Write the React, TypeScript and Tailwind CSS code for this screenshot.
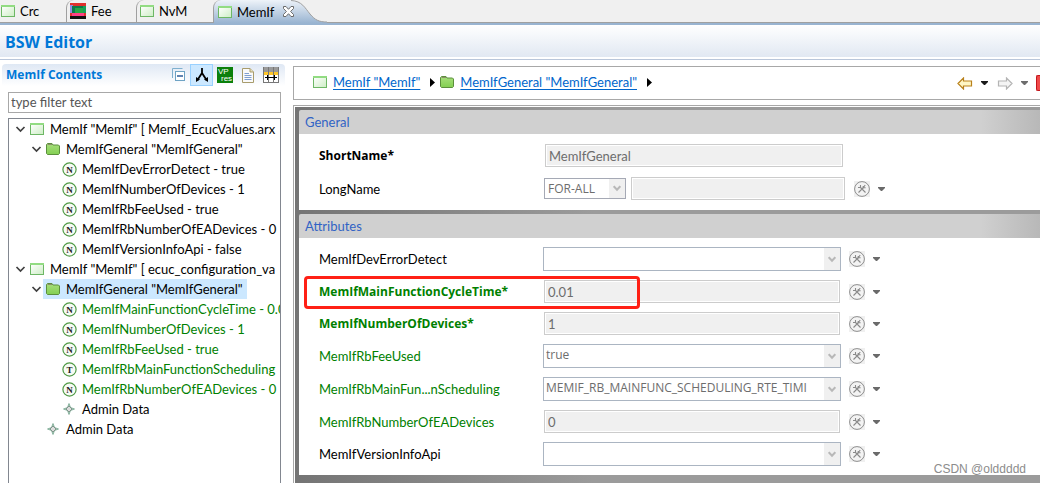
import { useState } from "react";
import type { ReactNode } from "react";

type IconKind = "module" | "folder" | "N" | "T" | "admin";

interface TreeNode {
  level: number;
  icon: IconKind;
  label: string;
  open?: boolean;
  green?: boolean;
}

const TREE: TreeNode[] = [
  { level: 0, icon: "module", label: 'MemIf "MemIf" [ MemIf_EcucValues.arx', open: true },
  { level: 1, icon: "folder", label: 'MemIfGeneral "MemIfGeneral"', open: true },
  { level: 2, icon: "N", label: "MemIfDevErrorDetect - true" },
  { level: 2, icon: "N", label: "MemIfNumberOfDevices - 1" },
  { level: 2, icon: "N", label: "MemIfRbFeeUsed - true" },
  { level: 2, icon: "N", label: "MemIfRbNumberOfEADevices - 0" },
  { level: 2, icon: "N", label: "MemIfVersionInfoApi - false" },
  { level: 0, icon: "module", label: 'MemIf "MemIf" [ ecuc_configuration_va', open: true },
  { level: 1, icon: "folder", label: 'MemIfGeneral "MemIfGeneral"', open: true },
  { level: 2, icon: "N", label: "MemIfMainFunctionCycleTime - 0.0", green: true },
  { level: 2, icon: "N", label: "MemIfNumberOfDevices - 1", green: true },
  { level: 2, icon: "N", label: "MemIfRbFeeUsed - true", green: true },
  { level: 2, icon: "T", label: "MemIfRbMainFunctionScheduling", green: true },
  { level: 2, icon: "N", label: "MemIfRbNumberOfEADevices - 0", green: true },
  { level: 2, icon: "admin", label: "Admin Data" },
  { level: 1, icon: "admin", label: "Admin Data" },
];

interface Attribute {
  id: string;
  label: string;
  kind: "select" | "text";
  value: string;
  tone: "plain" | "green" | "required";
  marked?: boolean;
}

const ATTRIBUTES: Attribute[] = [
  { id: "dev-error", label: "MemIfDevErrorDetect", kind: "select", value: "", tone: "plain" },
  { id: "cycle-time", label: "MemIfMainFunctionCycleTime*", kind: "text", value: "0.01", tone: "required", marked: true },
  { id: "devices", label: "MemIfNumberOfDevices*", kind: "text", value: "1", tone: "required" },
  { id: "fee-used", label: "MemIfRbFeeUsed", kind: "select", value: "true", tone: "green" },
  { id: "scheduling", label: "MemIfRbMainFun...nScheduling", kind: "select", value: "MEMIF_RB_MAINFUNC_SCHEDULING_RTE_TIMI", tone: "green" },
  { id: "ea-devices", label: "MemIfRbNumberOfEADevices", kind: "text", value: "0", tone: "green" },
  { id: "version-info", label: "MemIfVersionInfoApi", kind: "select", value: "", tone: "plain" },
];

const TONES = {
  plain: "text-black",
  green: "text-[#008000]",
  required: "font-['Open_Sans',sans-serif] text-[12px] font-bold text-[#008000]",
};

export default function App() {
  return (
    <div className="flex min-h-screen flex-col overflow-hidden bg-white font-['Lato','Open_Sans',sans-serif] text-[13px] leading-5 text-black">
      <EditorTabs />
      <header className="flex h-[33px] items-center border-b border-white bg-linear-to-b from-white to-[#e1e8f2] px-[5px] pt-0.5">
        <h1 className="font-['Open_Sans',sans-serif] text-[16px] font-bold text-[#0078d7]">BSW Editor</h1>
      </header>
      <div className="h-0.5 border-b border-[#b9c6da]" />
      <main className="flex flex-1">
        <ContentsPane />
        <DetailsPane />
      </main>
    </div>
  );
}

function EditorTabs() {
  return (
    <nav className="flex h-[25px] border-b-2 border-[#99b4d1] bg-[#f0f0f0]" role="tablist">
      <EditorTab label="Crc" className="w-[66px] border-b border-[#a0a0a0] pl-px" />
      <EditorTab label="Fee" className="w-[70px] rounded-tl-lg border-b border-l border-[#a0a0a0] pl-[3px]" picture />
      <EditorTab label="NvM" className="w-[77px] rounded-tl-lg border-b border-l border-[#a0a0a0] pl-[3px]" />
      <div className="flex h-[23px] w-[78px] items-center rounded-tl-lg border-l border-[#a0a0a0] bg-linear-to-b from-[#eef3f9] to-[#99b4d1] pl-1">
        <ModuleIcon />
        <button role="tab" aria-selected="true" className="ml-[5px] w-[46px] shrink-0 text-left">MemIf</button>
        <button aria-label="Close MemIf" className="relative z-10 shrink-0"><CloseIcon /></button>
      </div>
      <div className="h-[23px] w-[36px]">
        <svg viewBox="0 0 36 23" className="block h-[23px] w-[36px]">
          <defs>
            <linearGradient id="tab" x2="0" y2="1">
              <stop stopColor="#eef3f9" />
              <stop offset="1" stopColor="#99b4d1" />
            </linearGradient>
          </defs>
          <path d="M0 0H1C11 1 14 8 19 14C24 20 28 22 36 22V23H0Z" fill="url(#tab)" />
          <path d="M0 .5C11 1 14 8 19 14C24 20 28 22 36 22" fill="none" stroke="#a0a0a0" />
        </svg>
      </div>
      <div className="flex-1 border-b border-[#a0a0a0]" />
    </nav>
  );
}

function EditorTab({ label, className, picture }: { label: string; className: string; picture?: boolean }) {
  return (
    <div className={`flex h-[23px] items-center ${className}`}>
      {picture ? <ChipIcon /> : <ModuleIcon />}
      <button role="tab" aria-selected="false" className="ml-[5px]">{label}</button>
    </div>
  );
}

function ContentsPane() {
  const [selected, setSelected] = useState(8);

  return (
    <aside className="flex w-[287px] shrink-0 flex-col px-[2px] pt-1">
      <div className="flex h-[22px] items-center rounded-t bg-linear-to-b from-[#dfe8f4] to-white pr-[3px] pl-1">
        <h2 className="flex-1 font-['Open_Sans',sans-serif] text-[12px] font-bold text-[#0078d7]">MemIf Contents</h2>
        <div className="flex items-center">
          <ToolButton label="Collapse all"><CollapseIcon /></ToolButton>
          <ToolButton label="Hierarchy" active><ForkIcon /></ToolButton>
          <ToolButton label="Resources"><VpIcon /></ToolButton>
          <ToolButton label="Report"><PageIcon /></ToolButton>
          <ToolButton label="Columns"><TableIcon /></ToolButton>
        </div>
      </div>
      <input
        type="text"
        aria-label="Filter"
        placeholder="type filter text"
        className="mx-[6px] mt-[6px] h-[21px] w-[273px] border border-[#a8a8a8] px-0.5 pb-0.5 outline-none placeholder:text-[#555]"
      />
      <ul role="tree" className="mx-[6px] mt-[5px] w-[273px] flex-1 overflow-hidden border border-b-0 border-[#828790] pl-1">
        {TREE.map((node, i) => (
          <li key={i} role="treeitem" aria-selected={i === selected} className="flex h-5 items-center whitespace-nowrap">
            <span
              className={`flex shrink-0 items-center justify-end ${
                node.level === 0 ? "w-[14px]" : node.level === 1 ? "w-[30px]" : "w-[46px]"
              }`}
            >
              {node.open && <Chevron />}
            </span>
            <button
              onClick={() => setSelected(i)}
              className={`flex h-5 items-center pr-1 pl-0.5 ${i === selected ? "bg-[#cce8ff]" : ""} ${
                node.green ? "text-[#008000]" : ""
              }`}
            >
              <span className="mr-[5px] flex w-4 justify-center">
                <NodeIcon kind={node.icon} />
              </span>
              {node.label}
            </button>
          </li>
        ))}
      </ul>
    </aside>
  );
}

function ToolButton({ label, active, children }: { label: string; active?: boolean; children: ReactNode }) {
  return (
    <button
      aria-label={label}
      className={`flex h-[22px] w-[23px] items-center justify-center border ${
        active ? "border-[#99d1ff] bg-[#cce8ff]" : "border-transparent"
      }`}
    >
      {children}
    </button>
  );
}

function DetailsPane() {
  return (
    <section className="flex min-w-0 flex-1 flex-col pt-1.5 pl-[6px]">
      <div className="flex h-[34px] items-center border border-r-0 border-[#a8a8a8] pb-0.5 pl-[19px]">
        <ModuleIcon />
        <a href="#memif" className="ml-[6px] text-[#0066cc] underline underline-offset-2">MemIf "MemIf"</a>
        <RightArrow />
        <FolderIcon />
        <a href="#general" className="ml-[6px] text-[#0066cc] underline underline-offset-2">MemIfGeneral "MemIfGeneral"</a>
        <RightArrow />
        <div className="ml-auto flex items-center pt-0.5">
          <button aria-label="Back"><BackArrow /></button>
          <button aria-label="Back history" className="ml-[8px]"><DownArrow color="#1a1a1a" /></button>
          <button aria-label="Forward" className="ml-[9px]"><ForwardArrow /></button>
          <button aria-label="Forward history" className="ml-[8px]"><DownArrow color="#6d6d6d" /></button>
          <button aria-label="Stop" className="ml-2 h-4 w-1 rounded-l-xs border border-r-0 border-[#c4161c] bg-[#f04a4a]" />
        </div>
      </div>

      <div className="mt-[5px] flex flex-1 flex-col border-t border-l border-[#a8a8a8] pt-px pl-px">
        <div className="flex-1 bg-linear-to-r from-[#747474] to-[#9b9b9b] to-40% pt-[3px] pl-1">
          <Section title="General">
            <div className="flex flex-col gap-[10px] pt-[10px] pb-[10px]">
              <Row id="short-name" label="ShortName*" labelClass="font-['Open_Sans',sans-serif] text-[12px] font-bold">
                <TextField id="short-name" value="MemIfGeneral" className="ml-px w-[298px]" />
              </Row>
              <Row id="long-name" label="LongName" labelClass="">
                <div className="relative h-[21px] w-[82px]">
                  <select
                    aria-label="Language"
                    disabled
                    className="block h-full w-full appearance-none border border-[#a5a9b5] bg-white pb-0.5 pl-[3px] font-['Open_Sans',sans-serif] text-[12px] text-[#6d6d6d] opacity-100"
                  >
                    <option>FOR-ALL</option>
                  </select>
                  <DropMark />
                </div>
                <TextField id="long-name" value="" className="ml-[5px] w-[214px]" />
                <ToolMenu className="ml-[9px]" />
              </Row>
            </div>
          </Section>
          <div className="h-1" />
          <Section title="Attributes">
            <div className="flex flex-col gap-[9px] pt-[9px] pb-[9px]">
              {ATTRIBUTES.map((attr) => (
                <Row key={attr.id} id={attr.id} label={attr.label} labelClass={TONES[attr.tone]}>
                  {attr.kind === "select" ? (
                    <SelectField id={attr.id} value={attr.value} />
                  ) : (
                    <TextField id={attr.id} value={attr.value} className="mr-px w-[296px]" />
                  )}
                  <ToolMenu className="ml-2" />
                  {attr.marked && (
                    <span className="pointer-events-none absolute -top-1 -left-[15px] h-[33px] w-[336px] rounded-sm border-3 border-[#ff2015]" />
                  )}
                </Row>
              ))}
            </div>
            <p className="absolute right-[14px] bottom-0 font-['Liberation_Sans',sans-serif] text-[12px] leading-3 text-[#8c8c8c]">
              CSDN @olddddd
            </p>
          </Section>
          <div className="h-2" />
        </div>
      </div>
    </section>
  );
}

function Section({ title, children }: { title: string; children: ReactNode }) {
  return (
    <div className="relative">
      <h3 className="h-6 rounded-tl-xs bg-linear-to-r from-[#d0d0d0] from-92% to-[#b8b8b8] pt-0.5 pl-[6px] text-[#3163c5]">
        {title}
      </h3>
      <div className="bg-white pl-5">{children}</div>
    </div>
  );
}

function Row({ id, label, labelClass, children }: { id: string; label: string; labelClass: string; children: ReactNode }) {
  return (
    <div className="relative flex items-center">
      <label htmlFor={id} className={`w-[225px] shrink-0 ${labelClass}`}>{label}</label>
      {children}
    </div>
  );
}

function TextField({ id, value, className }: { id: string; value: string; className: string }) {
  return (
    <input
      id={id}
      type="text"
      readOnly
      value={value}
      className={`h-[23px] shrink-0 border border-[#cccccc] bg-[#f0f0f0] px-[3px] text-[#6d6d6d] shadow-[inset_0_0_0_1px_#fff] outline-none ${className}`}
    />
  );
}

function SelectField({ id, value }: { id: string; value: string }) {
  return (
    <div className="relative -ml-px h-6 w-[298px] shrink-0">
      <select
        id={id}
        disabled
        className="block h-full w-full appearance-none border border-[#abb5c2] bg-white pr-5 pb-[3px] pl-0.5 font-['Open_Sans',sans-serif] text-[12px] text-[#6d6d6d] opacity-100"
      >
        <option>{value}</option>
      </select>
      <DropMark />
    </div>
  );
}

function DropMark() {
  return (
    <span className="pointer-events-none absolute inset-y-px right-px flex w-4 items-center justify-center bg-[#f0f0f0]">
      <svg width="8" height="7" viewBox="0 0 8 7">
        <path d="M.7 1.2L4 4.7L7.3 1.2" fill="none" stroke="#b8b8b8" strokeWidth="2" />
      </svg>
    </span>
  );
}

function ToolMenu({ className }: { className: string }) {
  return (
    <span className={`flex items-center ${className}`}>
      <button aria-label="Edit value">
        <svg width="16" height="16" viewBox="0 0 16 16" className="block">
          <rect width="16" height="16" fill="#f0f0f0" />
          <circle cx="8" cy="8" r="7.4" fill="#f3f3f3" stroke="#8e8e8e" />
          <path d="M6 6L11.5 11.5M4.5 11.5L9.5 6.5" stroke="#8a8a8a" strokeWidth="1.1" />
          <path d="M6.5 4V6.5H4M9.2 5V6.8H11.6M11.2 4.2L9.7 6" fill="none" stroke="#8a8a8a" strokeWidth="1.1" />
        </svg>
      </button>
      <button aria-label="Value menu" className="ml-2"><DownArrow color="#6a6a6a" /></button>
    </span>
  );
}

function NodeIcon({ kind }: { kind: IconKind }) {
  if (kind === "module") return <ModuleIcon />;
  if (kind === "folder") return <FolderIcon />;
  if (kind === "admin") {
    return (
      <svg width="12" height="12" viewBox="0 0 12 12">
        <path d="M6 .5L7.5 4.5L11.5 6L7.5 7.5L6 11.5L4.5 7.5L.5 6L4.5 4.5Z" fill="#c5d3cb" stroke="#6fa58c" strokeWidth=".8" />
        <path d="M6 3L9 6L6 9L3 6Z" fill="#dcdcdc" stroke="#7f948a" />
      </svg>
    );
  }
  return (
    <svg width="15" height="15" viewBox="0 0 15 15" className="shrink-0">
      <circle cx="7.5" cy="7.5" r="6.6" fill="#f7fbf5" stroke="#4f9a45" strokeWidth="1.2" />
      <text x="7.5" y="10.7" textAnchor="middle" fontSize="9" fontWeight="bold" fontFamily="Liberation Serif" fill="#222">
        {kind}
      </text>
    </svg>
  );
}

function ModuleIcon() {
  return (
    <svg width="14" height="12" viewBox="0 0 14 12" className="shrink-0">
      <defs>
        <linearGradient id="module" x2="1" y2="1">
          <stop stopColor="#ffffff" />
          <stop offset="1" stopColor="#cdeec5" />
        </linearGradient>
      </defs>
      <rect x=".5" y="1" width="13" height="10.5" fill="url(#module)" stroke="#6db765" />
      <path d="M0 1H14" stroke="#92dc82" strokeWidth="2" />
    </svg>
  );
}

function FolderIcon() {
  return (
    <svg width="14" height="12" viewBox="0 0 14 12" className="shrink-0">
      <defs>
        <linearGradient id="folder" x2="0" y2="1">
          <stop stopColor="#a8df7c" />
          <stop offset="1" stopColor="#83cf52" />
        </linearGradient>
      </defs>
      <path d="M.5 10.5V1.5L1.5 .5H6L7 2H12.5L13.5 3V10.5L12.5 11.5H1.5Z" fill="url(#folder)" stroke="#5b8f3c" />
      <path d="M1.5 1.5H6" stroke="#8d8d6d" />
    </svg>
  );
}

function ChipIcon() {
  return (
    <svg width="16" height="16" viewBox="0 0 16 16" shapeRendering="crispEdges" className="shrink-0">
      <rect width="16" height="16" fill="#e0302c" />
      <rect y="2" width="3" height="8" fill="#8f8de0" />
      <rect x="2" y="3" width="12" height="7" fill="#0b7a4b" />
      <rect x="5" y="5" width="8" height="5" fill="#27a845" />
      <rect x="13" y="3" width="3" height="7" fill="#17a05a" />
      <rect x="2" y="10" width="12" height="3" fill="#ff3f86" />
      <rect y="13" width="16" height="3" fill="#111" />
    </svg>
  );
}

function CloseIcon() {
  return (
    <svg width="11" height="11" viewBox="0 0 11 11" className="block">
      <path
        d="M.5 .5H3L5.5 3.3L8 .5H10.5V2.5L7.6 5.5L10.5 8.5V10.5H8L5.5 7.7L3 10.5H.5V8.5L3.4 5.5L.5 2.5Z"
        fill="#fff"
        stroke="#6b6b6b"
      />
    </svg>
  );
}

function Chevron() {
  return (
    <svg width="12" height="8" viewBox="0 0 12 8" className="shrink-0">
      <path d="M1.5 2L5.5 6L9.5 2" fill="none" stroke="#404040" strokeWidth="1.7" />
    </svg>
  );
}

function RightArrow() {
  return (
    <svg width="20" height="9" viewBox="0 0 20 9" className="shrink-0">
      <path d="M10 0L15 4.5L10 9Z" fill="#000" />
    </svg>
  );
}

function DownArrow({ color }: { color: string }) {
  return (
    <svg width="7" height="4" viewBox="0 0 7 4" className="block">
      <path d="M0 0H7V1L4 4H3L0 1Z" fill={color} />
    </svg>
  );
}

function BackArrow() {
  return (
    <svg width="16" height="13" viewBox="0 0 16 13" className="block">
      <path d="M1 6.5L6.5 1V4H14.5V9H6.5V12Z" fill="#fff6c4" stroke="#b9811b" strokeWidth="1.2" />
    </svg>
  );
}

function ForwardArrow() {
  return (
    <svg width="16" height="13" viewBox="0 0 16 13" className="block">
      <path d="M15 6.5L9.5 1V4H1.5V9H9.5V12Z" fill="#f4f4f4" stroke="#b4b4b4" strokeWidth="1.2" />
    </svg>
  );
}

function CollapseIcon() {
  return (
    <svg width="14" height="14" viewBox="0 0 14 14">
      <path d="M.5 10V.5H10.5" fill="none" stroke="#7fb0cf" />
      <rect x="3.5" y="3.5" width="9" height="9" fill="#fff" stroke="#6ea3c4" />
      <path d="M5 8H11" stroke="#1d4f91" strokeWidth="1.4" />
    </svg>
  );
}

function ForkIcon() {
  return (
    <svg width="14" height="16" viewBox="0 0 14 16">
      <path d="M7 1V6L2.5 13M7 6L11.5 13" fill="none" stroke="#000" strokeWidth="1.8" />
      <path d="M1 10L5 12.5L1 15ZM13 10L9 12.5L13 15Z" fill="#000" />
    </svg>
  );
}

function VpIcon() {
  return (
    <svg width="16" height="16" viewBox="0 0 16 16">
      <rect width="16" height="16" fill="#0b800b" />
      <text x="1" y="7" fontSize="8" fontFamily="Liberation Sans" fill="#fff">VP</text>
      <text x="4" y="14" fontSize="8" fontFamily="Liberation Sans" fill="#fff">res</text>
    </svg>
  );
}

function PageIcon() {
  return (
    <svg width="12" height="15" viewBox="0 0 12 15">
      <path d="M.5 .5H8L11.5 4V14.5H.5Z" fill="#fafafa" stroke="#a89c6c" />
      <path d="M8 .5V4H11.5" fill="#e8dfb8" stroke="#a89c6c" />
      <path d="M2.5 5.5H7M2.5 7.5H9.5M2.5 9.5H9.5M2.5 11.5H9.5" stroke="#7f9fd0" />
    </svg>
  );
}

function TableIcon() {
  return (
    <svg width="16" height="16" viewBox="0 0 16 16" shapeRendering="crispEdges">
      <rect width="16" height="16" fill="#fff" />
      <rect width="16" height="5" fill="#9a9a9a" />
      <rect y="5" width="16" height="3" fill="#ffc629" />
      <path d="M.5 0V16M5.5 0V16M10.5 0V16M15.5 0V16" stroke="#777" />
      <path d="M0 15.5H16" stroke="#777" />
      <path d="M2 10.5H14M4.5 8V13M11.5 8V13" stroke="#000" />
    </svg>
  );
}
